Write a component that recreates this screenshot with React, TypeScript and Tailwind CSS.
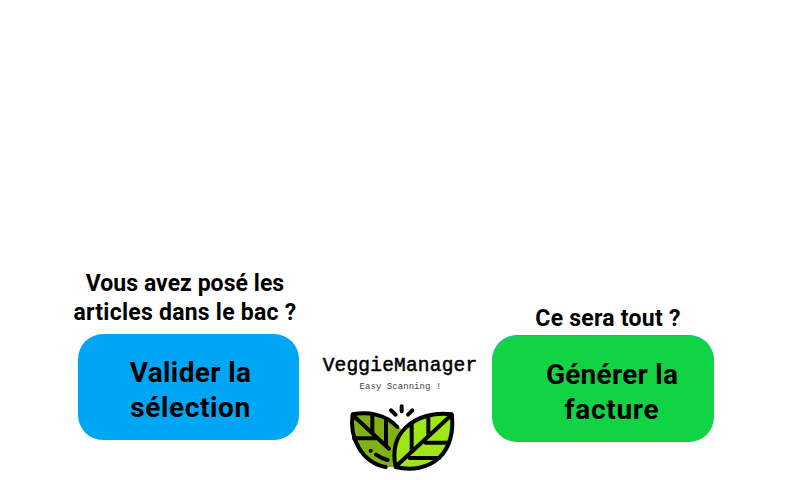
import React from "react";

function Leaves() {
  return (
    <svg className="block h-[80px] w-[125px]" viewBox="0 0 375 240" fill="none" stroke="#000" strokeWidth="12" strokeLinecap="round" strokeLinejoin="round">
      <path d="M38 55C82 45 144 56 182 98L205 140L170 214L137 213C68 198 25 135 38 55Z" fill="#80b217" stroke="none" />
      <path d="M172 93C135 53 82 47 38 55C27 125 65 199 137 213" />
      <path d="M38 57L147 158M97 58V109M138 76V147M42 127H112" />
      <path d="M92 164h.1M108 176Q124 187 143 192" />
      <path d="M167 213C158 170 165 126 197 95C233 60 288 48 335 55C342 105 330 154 298 185C264 217 214 224 167 213Z" fill="#a0e516" />
      <path d="M168 211L335 56M215 85V167M265 61V121M257 140H326M209 186H297" />
      <path d="M185 31V46M153 43L167 56M217 43L204 56" />
    </svg>
  );
}

export default function App() {
  return (
    <main className="flex h-[480px] w-[800px] overflow-hidden bg-white font-['Roboto',sans-serif] font-bold text-black">
      <section className="ml-[70px] w-[230px] pt-[269px]">
        <h2 className="flex flex-col items-center text-[23px] leading-[29px] whitespace-nowrap">
          <span className="tracking-[0.05px]">Vous avez posé les</span>
          <span className="tracking-[0.25px]">articles dans le bac ?</span>
        </h2>
        <button className="mt-[7px] ml-[8px] flex h-[106px] w-[221px] flex-col items-center justify-center rounded-[25px] bg-[#00a6f6] pt-[5px] pl-[4px] text-[28px] leading-[35px]">
          <span className="tracking-[0.35px]">Valider la</span>
          <span className="tracking-[0.6px]">sélection</span>
        </button>
      </section>

      <section className="flex w-[192px] flex-col items-center pt-[354px] pl-[8px] font-['Liberation_Mono',monospace] font-normal whitespace-nowrap">
        <h1 className="text-[19.5px] leading-[24px] tracking-[0.2px] [-webkit-text-stroke:0.5px_#000]">VeggieManager</h1>
        <p className="mt-[3px] pl-[1px] text-[9px] leading-[12px] tracking-[0.05px] text-[#444]">Easy Scanning !</p>
        <div className="mt-[2.5px] pl-[4.5px]">
          <Leaves />
        </div>
      </section>

      <section className="w-[222px] pt-[304px]">
        <h2 className="pl-[10px] text-center text-[23px] leading-[29px] tracking-[0.25px] whitespace-nowrap">Ce sera tout ?</h2>
        <button className="mt-[2px] flex h-[107px] w-[222px] flex-col items-center justify-center rounded-[25px] border-t border-[#10a8e8] bg-[#11d444] pt-[5px] pl-[18px] text-[28px] leading-[35px]">
          <span className="tracking-[0.25px]">Générer la</span>
          <span className="tracking-[0.7px]">facture</span>
        </button>
      </section>
    </main>
  );
}
